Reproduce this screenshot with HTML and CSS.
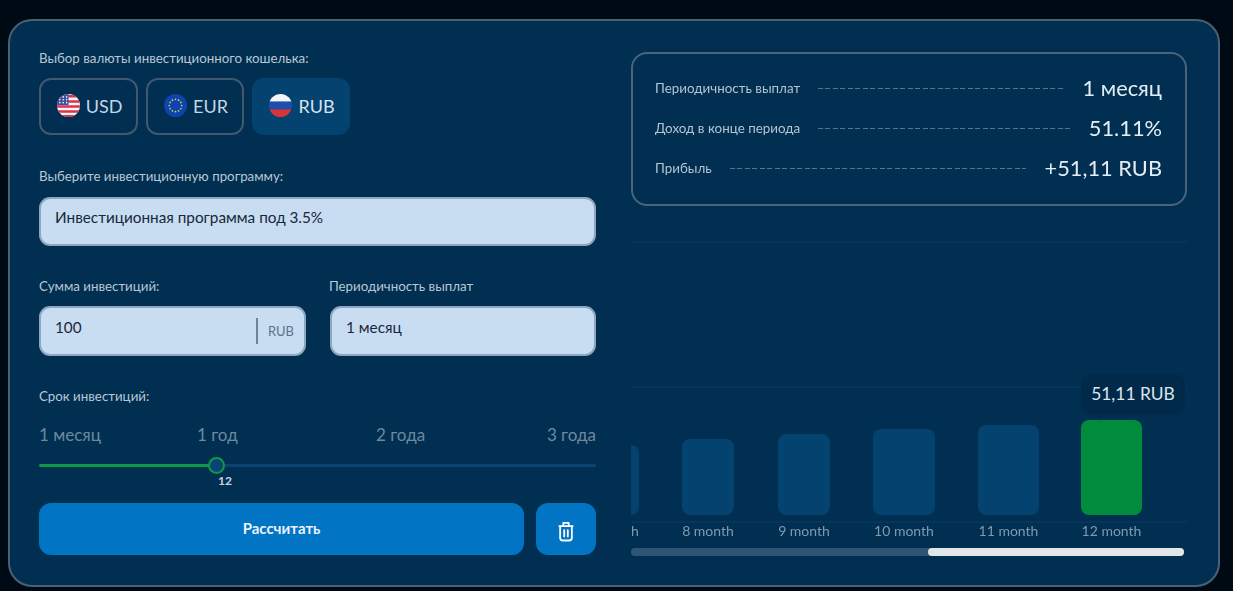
FILE: index.html
```html
<!DOCTYPE html>
<html lang="ru">
<head>
<meta charset="utf-8">
<title>Инвестиционный калькулятор</title>
<link rel="stylesheet" href="styles.css">
</head>
<body>
<main class="card">
  <section class="form">
    <div class="label label-first">Выбор валюты инвестиционного кошелька:</div>
    <div class="currencies">
      <button class="cur cur-usd">
        <svg class="flag" viewBox="0 0 24 24"><defs><clipPath id="c1"><circle cx="12" cy="12" r="12"/></clipPath></defs><g clip-path="url(#c1)"><rect width="24" height="24" fill="#f4f4f6"/><path d="M0 1h24v2.6H0zM0 6.4h24V9H0zM0 11.8h24v2.6H0zM0 17h24v2.6H0zM0 22h24v2H0z" fill="#d8344a"/><rect width="12" height="11.5" fill="#3f4f9e"/><g fill="#fff"><circle cx="3" cy="3" r=".8"/><circle cx="6.5" cy="3" r=".8"/><circle cx="10" cy="3" r=".8"/><circle cx="3" cy="6" r=".8"/><circle cx="6.5" cy="6" r=".8"/><circle cx="10" cy="6" r=".8"/><circle cx="3" cy="9" r=".8"/><circle cx="6.5" cy="9" r=".8"/><circle cx="10" cy="9" r=".8"/></g></g></svg>
        USD
      </button>
      <button class="cur cur-eur">
        <svg class="flag" viewBox="0 0 24 24"><circle cx="12" cy="12" r="12" fill="#0c45b0"/><g fill="#e8c840"><circle cx="12" cy="5.5" r=".9"/><circle cx="15.2" cy="6.4" r=".9"/><circle cx="17.6" cy="8.8" r=".9"/><circle cx="18.5" cy="12" r=".9"/><circle cx="17.6" cy="15.2" r=".9"/><circle cx="15.2" cy="17.6" r=".9"/><circle cx="12" cy="18.5" r=".9"/><circle cx="8.8" cy="17.6" r=".9"/><circle cx="6.4" cy="15.2" r=".9"/><circle cx="5.5" cy="12" r=".9"/><circle cx="6.4" cy="8.8" r=".9"/><circle cx="8.8" cy="6.4" r=".9"/></g></svg>
        EUR
      </button>
      <button class="cur cur-active">
        <svg class="flag" viewBox="0 0 24 24"><defs><clipPath id="c3"><circle cx="12" cy="12" r="12"/></clipPath></defs><g clip-path="url(#c3)"><rect width="24" height="8" fill="#f5f5f7"/><rect y="8" width="24" height="8" fill="#1d4fb0"/><rect y="16" width="24" height="8" fill="#d8343c"/></g></svg>
        RUB
      </button>
    </div>

    <div class="label label-program">Выберите инвестиционную программу:</div>
    <div class="field field-wide">Инвестиционная программа под 3.5%</div>

    <div class="pair">
      <div class="pair-col">
        <div class="label">Сумма инвестиций:</div>
        <div class="field field-amount"><span class="amount">100</span><span class="unit">RUB</span></div>
      </div>
      <div class="pair-col">
        <div class="label">Периодичность выплат</div>
        <div class="field">1 месяц</div>
      </div>
    </div>

    <div class="label label-term">Срок инвестиций:</div>
    <div class="marks"><span>1 месяц</span><span>1 год</span><span>2 года</span><span class="mark-last">3 года</span></div>
    <div class="slider">
      <div class="slider-fill"></div>
      <div class="slider-knob"></div>
      <div class="slider-value">12</div>
    </div>

    <div class="actions">
      <button class="btn btn-main">Рассчитать</button>
      <button class="btn btn-trash" aria-label="Очистить">
        <svg width="18" height="23" viewBox="0 0 20 24" fill="none" stroke="#fff" stroke-width="2" stroke-linecap="round" stroke-linejoin="round"><path d="M2.500 6h15M7 5.500V2.500h6V5.500"/><path d="M3.500 6v13.500a3 3 0 0 0 3 2.500h7a3 3 0 0 0 3-2.500V6"/><path d="M8 10.500v7M12 10.500v7"/></svg>
      </button>
    </div>
  </section>

  <section class="side">
    <div class="summary">
      <div class="row"><span class="row-name">Периодичность выплат</span><span class="dash"></span><span class="row-val">1 месяц</span></div>
      <div class="row"><span class="row-name">Доход в конце периода</span><span class="dash"></span><span class="row-val">51.11%</span></div>
      <div class="row"><span class="row-name">Прибыль</span><span class="dash"></span><span class="row-val">+51,11 RUB</span></div>
    </div>

    <div class="chart">
      <div class="gridline"></div>
      <div class="bars">
        <div class="col"><div class="bar h-70"></div></div>
        <div class="col"><div class="bar h-76"></div></div>
        <div class="col"><div class="bar h-81"></div></div>
        <div class="col"><div class="bar h-86"></div></div>
        <div class="col"><div class="bar h-90"></div></div>
        <div class="col"><div class="bar bar-active h-95"></div><div class="tip">51,11 RUB</div></div>
      </div>
    </div>
    <div class="xaxis">
      <span class="x">7 month</span><span class="x">8 month</span><span class="x">9 month</span><span class="x">10 month</span><span class="x">11 month</span><span class="x">12 month</span>
    </div>
    <div class="scroll"><div class="thumb"></div></div>
  </section>
</main>
</body>
</html>
```

FILE: styles.css
```css
* { box-sizing: border-box; }
html, body { margin: 0; height: 100%; }
body {
  background: #000a14;
  padding: 19px 13px 4px 8px;
  font-family: "Lato", "Noto Sans", sans-serif;
  color: #c9d6e2;
  overflow: hidden;
}
.card {
  height: 568px;
  display: flex;
  gap: 35px;
  padding: 31px 31px 0 29px;
  background: #002f52;
  border: 2px solid #4b6074;
  border-radius: 24px;
  filter: blur(0.5px);
}
.form { width: 557px; flex: none; }
.side { width: 556px; flex: none; }

.label { font-size: 13.300px; line-height: 16px; color: #b9c7d4; }
.label-first { margin-top: -2px; }
.currencies { display: flex; gap: 8px; margin-top: 12px; }
.cur {
  height: 57px;
  width: 99px;
  display: flex;
  align-items: center;
  justify-content: center;
  gap: 6px;
  padding: 0 0 2px 2px;
  background: transparent;
  border: 2px solid #42586c;
  border-radius: 12px;
  color: #c5d5e3;
  font: 400 18px "Lato", "Noto Sans", sans-serif;
}
.cur-eur { width: 98px; }
.cur-active { width: 98px; background: #04426f; border-color: #04426f; color: #d4e4f2; }
.flag { width: 23px; height: 23px; flex: none; }

.label-program { margin-top: 33px; }
.field {
  height: 50px;
  margin-top: 12px;
  padding: 0 14px 9px;
  display: flex;
  align-items: center;
  background: #c8dcf2;
  border: 2px solid #8da7c0;
  border-radius: 11px;
  color: #17283a;
  font-size: 15.300px;
}
.field-wide { height: 49px; margin-top: 13px; padding-bottom: 10px; }
.pair { display: flex; gap: 24px; margin-top: 32px; }
.pair-col { flex: 1; min-width: 0; }
.pair-col:first-child .field { width: 267px; }
.pair-col:first-child { flex: none; width: 266px; }
.pair-col:last-child .field { margin-left: 1px; }
.field-amount { justify-content: space-between; padding-right: 10px; }
.unit {
  font-size: 13px;
  color: #5d7387;
  height: 26px;
  line-height: 26px;
  padding-left: 10px;
  margin-top: 9px;
  border-left: 2px solid #6d8296;
}

.label-term { margin-top: 32px; }
.marks {
  display: grid;
  grid-template-columns: 158px 179px 1fr auto;
  margin-top: 20px;
  font-size: 17px;
  line-height: 22px;
  color: #6e899f;
}
.slider { position: relative; height: 3px; margin-top: 18px; background: #0a4474; border-radius: 2px; }
.slider-fill { width: 177px; height: 3px; background: #0d9a45; border-radius: 2px; }
.slider-knob {
  position: absolute;
  left: 169px;
  top: -7px;
  width: 17px;
  height: 17px;
  border: 2px solid #0d9a45;
  border-radius: 50%;
  background: #0a4474;
}
.slider-value {
  position: absolute;
  left: 179px;
  top: 9px;
  font-size: 12px;
  line-height: 15px;
  font-weight: 700;
  color: #c9d6e2;
}
.actions { display: flex; gap: 12px; margin-top: 36px; }
.btn {
  height: 52px;
  border: 0;
  border-radius: 12px;
  background: #0174c4;
  color: #eaf3fb;
  font: 700 15px "Lato", "Noto Sans", sans-serif;
  padding: 0 0 3px;
}
.btn-main { width: 485px; }
.btn-trash { width: 60px; display: flex; align-items: center; justify-content: center; padding: 4px 0 0; }

.summary {
  height: 154px;
  padding: 14px 23px 0 22px;
  border: 2px solid #4a6479;
  border-radius: 16px;
}
.row { display: flex; align-items: center; height: 40px; }
.row-name { font-size: 13.400px; color: #b5c4d2; white-space: nowrap; }
.dash {
  flex: 1;
  height: 1px;
  margin: 0 19px 0 18px;
  background: repeating-linear-gradient(90deg, #567690 0 5px, transparent 5px 7.500px);
}
.row-val { font-size: 21.800px; color: #e3edf5; white-space: nowrap; padding-bottom: 2px; }

.chart {
  position: relative;
  height: 282px;
  margin-top: 35px;
  border-top: 2px solid #053558;
}
.gridline { position: absolute; left: 0; right: 0; top: 143px; height: 2px; background: #053558; }
.bars {
  position: absolute;
  left: 0;
  right: 0;
  top: -100px;
  bottom: 8px;
  display: flex;
  align-items: flex-end;
  justify-content: flex-end;
  gap: 43px;
  padding-right: 45px;
  overflow: hidden;
}
.col { position: relative; width: 52px; height: 100%; flex: none; display: flex; align-items: flex-end; }
.col:nth-child(n+4), .x:nth-child(n+4) { width: 62px; }
.col:nth-child(n+5), .x:nth-child(n+5) { width: 61px; }
.col:nth-child(5), .x:nth-child(5) { margin-right: -1px; }
.col:nth-child(2), .x:nth-child(2) { margin-right: 1px; }
.bar { width: 100%; background: #04426f; border-radius: 8px; }
.bar-active { background: #008c3c; }
.h-70 { height: 70px; }
.h-76 { height: 76px; }
.h-81 { height: 81px; }
.h-86 { height: 86px; }
.h-90 { height: 90px; }
.h-95 { height: 95px; }
.tip {
  position: absolute;
  left: 0;
  bottom: 100px;
  width: 104px;
  height: 41px;
  line-height: 40px;
  text-align: center;
  background: #01294a;
  border-radius: 11px;
  color: #dbe6ef;
  font-size: 17.400px;
}
.tip::after {
  content: "";
  position: absolute;
  left: 16px;
  bottom: -4px;
  border: 3px solid transparent;
  border-top-color: #01294a;
  border-bottom: 0;
}
.xaxis {
  display: flex;
  justify-content: flex-end;
  gap: 43px;
  height: 21px;
  padding-right: 45px;
  border-top: 2px solid #053558;
  overflow: hidden;
  margin-top: -2px;
  font-size: 14px;
  line-height: 15px;
  color: #7f99ae;
}
.x { width: 52px; flex: none; text-align: center; white-space: nowrap; }
.scroll { width: 553px; height: 8px; margin-top: 6px; background: #2e5473; border-radius: 4px; display: flex; justify-content: flex-end; }
.thumb { width: 256px; height: 8px; background: #e3e6e8; border-radius: 4px; }
```
